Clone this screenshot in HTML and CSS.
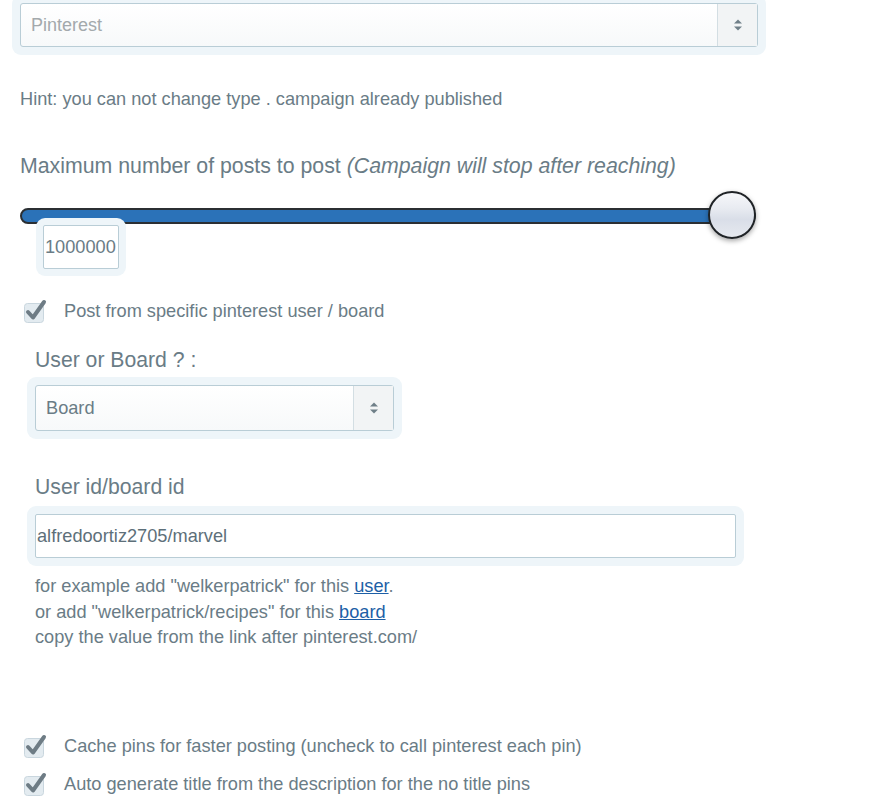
FILE: index.html
```html
<!DOCTYPE html>
<html>
<head>
<meta charset="utf-8">
<link rel="stylesheet" href="styles.css">
</head>
<body>
<div class="page">
  <div class="field-wrap top-select">
    <div class="select disabled">
      <span class="select-text">Pinterest</span>
      <span class="select-arrow"><svg width="10" height="14" viewBox="0 0 10 14"><path d="M1 5.5 L5 1.5 L9 5.5 Z M1 8.5 L5 12.5 L9 8.5 Z" fill="#6f7f88"/></svg></span>
    </div>
  </div>

  <p class="hint">Hint: you can not change type . campaign already published</p>

  <h3 class="label-lg">Maximum number of posts to post <em>(Campaign will stop after reaching)</em></h3>

  <div class="slider">
    <div class="slider-bar"></div>
    <div class="slider-handle"></div>
  </div>
  <div class="value-wrap">
    <div class="value-box">1000000</div>
  </div>

  <label class="check-row first">
    <span class="checkbox"><svg width="26" height="26" viewBox="0 0 26 26"><rect x="1.5" y="5.5" width="19" height="19" rx="3" fill="#e3ebf0" stroke="#c9d6de" stroke-width="1"/><path d="M5 14 L10 19.5 L21 4" fill="none" stroke="#6e7c85" stroke-width="4" stroke-linecap="round" stroke-linejoin="round"/></svg></span>
    <span>Post from specific pinterest user / board</span>
  </label>

  <div class="sub">
    <h4 class="label-md">User or Board ? :</h4>
    <div class="field-wrap board-select">
      <div class="select">
        <span class="select-text dark">Board</span>
        <span class="select-arrow"><svg width="10" height="14" viewBox="0 0 10 14"><path d="M1 5.5 L5 1.5 L9 5.5 Z M1 8.5 L5 12.5 L9 8.5 Z" fill="#6f7f88"/></svg></span>
      </div>
    </div>

    <h4 class="label-md second">User id/board id</h4>
    <div class="field-wrap id-input">
      <div class="input">alfredoortiz2705/marvel</div>
    </div>

    <p class="help">for example add "welkerpatrick" for this <a href="#">user</a>.<br>or add "welkerpatrick/recipes" for this <a href="#">board</a><br>copy the value from the link after pinterest.com/</p>
  </div>

  <label class="check-row cache">
    <span class="checkbox"><svg width="26" height="26" viewBox="0 0 26 26"><rect x="1.5" y="5.5" width="19" height="19" rx="3" fill="#e3ebf0" stroke="#c9d6de" stroke-width="1"/><path d="M5 14 L10 19.5 L21 4" fill="none" stroke="#6e7c85" stroke-width="4" stroke-linecap="round" stroke-linejoin="round"/></svg></span>
    <span>Cache pins for faster posting (uncheck to call pinterest each pin)</span>
  </label>
  <label class="check-row auto">
    <span class="checkbox"><svg width="26" height="26" viewBox="0 0 26 26"><rect x="1.5" y="5.5" width="19" height="19" rx="3" fill="#e3ebf0" stroke="#c9d6de" stroke-width="1"/><path d="M5 14 L10 19.5 L21 4" fill="none" stroke="#6e7c85" stroke-width="4" stroke-linecap="round" stroke-linejoin="round"/></svg></span>
    <span>Auto generate title from the description for the no title pins</span>
  </label>
</div>
</body>
</html>
```

FILE: styles.css
```css
* { box-sizing: border-box; }
html, body { margin: 0; padding: 0; background: #fff; }
body {
  font-family: "Liberation Sans", Arial, sans-serif;
  color: #6a7c86;
  font-size: 18.2px;
  overflow: hidden;
}
.page {
  padding: 0 0 0 20px;
  width: 896px;
}
.field-wrap {
  background: #eef5f9;
  border-radius: 9px;
  padding: 8px;
}
.top-select {
  margin: -5px 0 0 -8px;
  width: 754px;
}
.select {
  display: flex;
  align-items: stretch;
  height: 44px;
  border: 1px solid #b9cdd6;
  border-radius: 3px;
  background: linear-gradient(#fff, #f7f9fa);
}
.select-text {
  flex: 1;
  display: flex;
  align-items: center;
  padding-left: 10px;
  font-size: 18px;
  color: #a3a9ac;
}
.select-text.dark { color: #6a7c86; font-size: 18.2px; }
.select-arrow {
  width: 40px;
  border-left: 1px solid #d3dee3;
  display: flex;
  align-items: center;
  justify-content: center;
  background: #f2f4f5;
}
.hint {
  margin: 33px 0 0 0;
  font-size: 18.2px;
  line-height: 22px;
}
.label-lg {
  margin: 43px 0 0 0;
  font-size: 21.3px;
  font-weight: normal;
  line-height: 26px;
}
.label-lg em { font-style: italic; }
.slider {
  position: relative;
  margin-top: 29px;
  width: 736px;
  height: 16px;
}
.slider-bar {
  height: 16px;
  border: 2px solid #2b2f33;
  border-radius: 8px;
  background: #2b72b8;
}
.slider-handle {
  position: absolute;
  left: 688px;
  top: -17px;
  width: 48px;
  height: 48px;
  border-radius: 50%;
  border: 2px solid #1f2326;
  background: linear-gradient(#f6f7fa 0%, #e8ebf1 35%, #d9dee8 60%, #e6e9ef 100%);
  box-shadow: 0 2px 5px rgba(0,0,0,0.35);
}
.value-wrap {
  position: relative;
  margin: -6px 0 0 16px;
  width: 90px;
  background: #eef5f9;
  border-radius: 9px;
  padding: 7px;
}
.value-box {
  height: 44px;
  border: 1px solid #b9cdd6;
  border-radius: 2px;
  background: #fff;
  display: flex;
  align-items: center;
  font-size: 18.2px;
  color: #6a7c86;
  padding-left: 1px;
}
.check-row {
  display: flex;
  align-items: center;
  gap: 15px;
  font-size: 18.2px;
  line-height: 22px;
  margin-left: 3px;
}
.checkbox {
  width: 26px;
  height: 26px;
  display: block;
}
.checkbox svg { display: block; }
.check-row.first { margin-top: 22px; }
.sub { padding-left: 15px; }
.label-md {
  margin: 24px 0 0 0;
  font-size: 21.2px;
  font-weight: normal;
  line-height: 24px;
}
.label-md.second { margin-top: 36px; }
.board-select {
  margin: 5px 0 0 -8px;
  width: 375px;
}
.board-select .select { height: 46px; }
.id-input {
  margin: 7px 0 0 -8px;
  width: 717px;
}
.input {
  height: 44px;
  border: 1px solid #b9cdd6;
  border-radius: 2px;
  background: #fff;
  display: flex;
  align-items: center;
  padding-left: 1px;
  font-size: 18.2px;
  color: #5d6f79;
}
.help {
  margin: 8px 0 0 0;
  font-size: 18.2px;
  line-height: 25.5px;
}
.help a { color: #1d5fa6; text-decoration: underline; }
.check-row.cache { margin-top: 82px; }
.check-row.auto { margin-top: 12px; }
```
